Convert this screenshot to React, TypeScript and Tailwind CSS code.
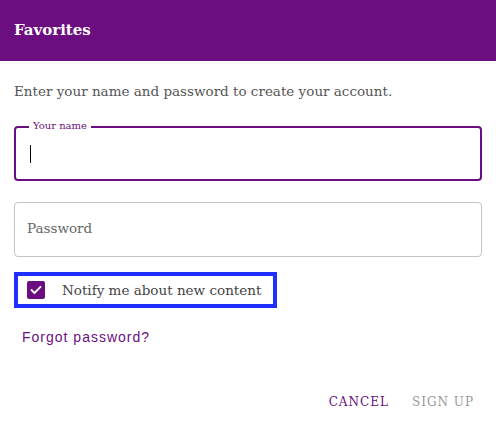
import React from "react";

export default function App() {
  const serif = { fontFamily: '"DejaVu Serif", serif' };
  return (
    <div className="w-[496px] h-[435px] bg-white" style={serif}>
      <div className="h-[61px] bg-[#6b0f80] flex items-center px-[14px]">
        <span className="text-white font-bold text-[15px]">Favorites</span>
      </div>
      <div className="px-[14px]">
        <p className="mt-[21px] text-[13.5px] text-[#555] leading-[19px]">
          Enter your name and password to create your account.
        </p>
        <div className="relative mt-[25px] h-[55px] rounded-[4px] border-2 border-[#6b0f80] flex items-center px-[14px]">
          <span className="absolute left-[13px] -top-[9px] bg-white px-[4px] text-[10px] leading-[14px] text-[#6b0f80]">
            Your name
          </span>
          <span className="w-px h-[18px] bg-black" />
        </div>
        <div className="mt-[21px] h-[55px] rounded-[4px] border border-[#c4c4c4] flex items-center px-[12px]">
          <span className="text-[13.5px] text-[#666] -mt-[3px]">Password</span>
        </div>
        <div className="mt-[15px] w-[263px] h-[36px] border-[4px] border-[#1f2fff] flex items-center pl-[9px]">
          <span className="w-[18px] h-[18px] rounded-[2px] bg-[#6b0f80] flex items-center justify-center">
            <svg width="12" height="10" viewBox="0 0 12 10" fill="none">
              <path d="M1.5 5 L4.5 8 L10.5 1.8" stroke="white" strokeWidth="1.8" strokeLinecap="round" strokeLinejoin="round" />
            </svg>
          </span>
          <span className="ml-[17px] text-[13.5px] text-[#444]">Notify me about new content</span>
        </div>
        <div className="mt-[17px] pl-[8px]">
          <span
            className="text-[14px] text-[#6b0f80] tracking-[1px]"
            style={{ fontFamily: '"Liberation Sans", Arial, sans-serif' }}
          >
            Forgot password?
          </span>
        </div>
        <div className="mt-[44px] flex justify-end gap-[23px] pr-[8px]">
          <span className="text-[12px] tracking-[1px] text-[#6b0f80]">CANCEL</span>
          <span className="text-[12px] tracking-[1px] text-[#999]">SIGN UP</span>
        </div>
      </div>
    </div>
  );
}
